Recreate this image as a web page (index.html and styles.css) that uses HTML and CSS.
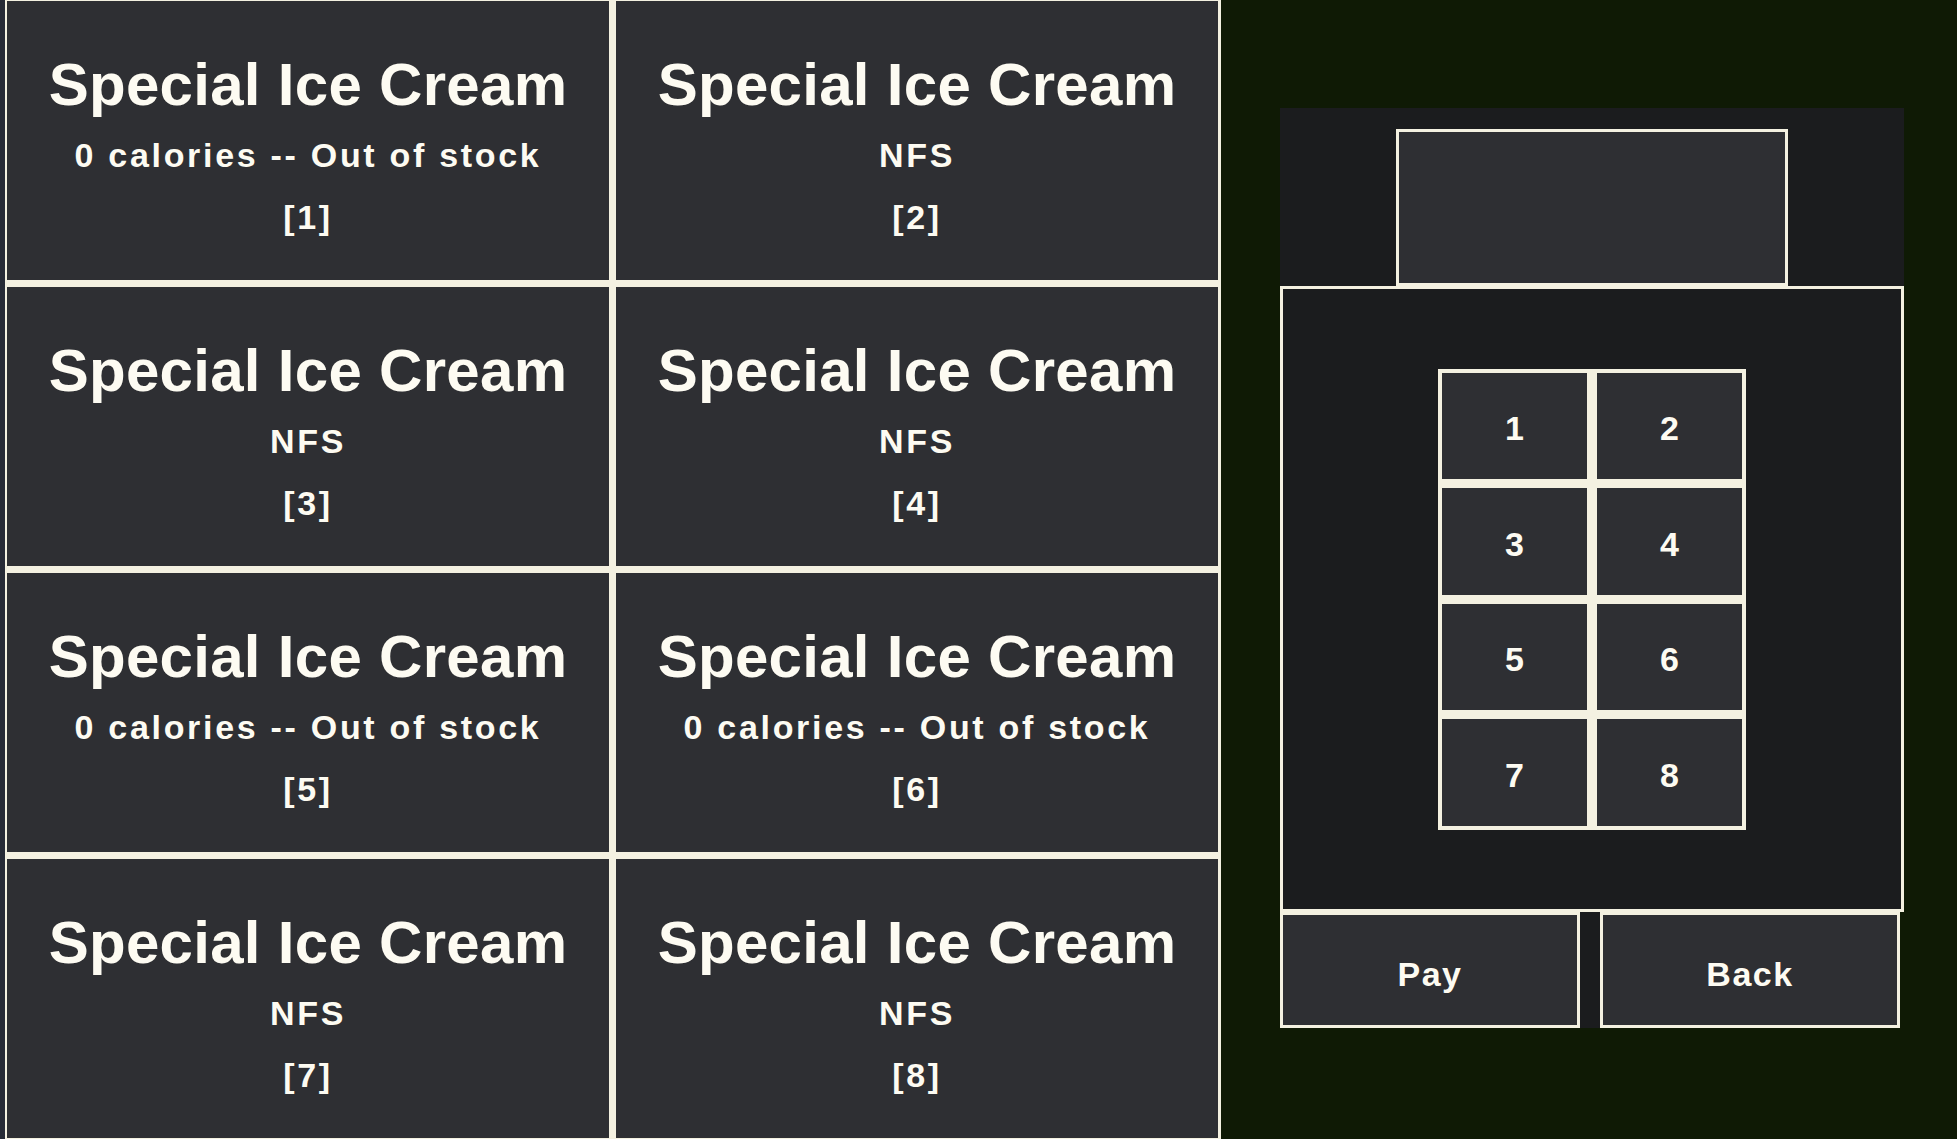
FILE: index.html
```html
<!DOCTYPE html>
<html lang="en">
<head>
<meta charset="utf-8">
<title>Ice Cream Vending</title>
<link rel="stylesheet" href="styles.css">
</head>
<body>
<div class="app">
  <div class="products">
    <div class="product"><div class="p-name">Special Ice Cream</div><div class="p-info">0 calories -- Out of stock</div><div class="p-idx">[1]</div></div>
    <div class="product"><div class="p-name">Special Ice Cream</div><div class="p-info">NFS</div><div class="p-idx">[2]</div></div>
    <div class="product"><div class="p-name">Special Ice Cream</div><div class="p-info">NFS</div><div class="p-idx">[3]</div></div>
    <div class="product"><div class="p-name">Special Ice Cream</div><div class="p-info">NFS</div><div class="p-idx">[4]</div></div>
    <div class="product"><div class="p-name">Special Ice Cream</div><div class="p-info">0 calories -- Out of stock</div><div class="p-idx">[5]</div></div>
    <div class="product"><div class="p-name">Special Ice Cream</div><div class="p-info">0 calories -- Out of stock</div><div class="p-idx">[6]</div></div>
    <div class="product"><div class="p-name">Special Ice Cream</div><div class="p-info">NFS</div><div class="p-idx">[7]</div></div>
    <div class="product"><div class="p-name">Special Ice Cream</div><div class="p-info">NFS</div><div class="p-idx">[8]</div></div>
  </div>
  <div class="side">
    <div class="panel">
      <div class="panel-top">
        <div class="display"></div>
      </div>
      <div class="panel-keys">
        <div class="keypad">
          <div class="key">1</div><div class="key">2</div>
          <div class="key">3</div><div class="key">4</div>
          <div class="key">5</div><div class="key">6</div>
          <div class="key">7</div><div class="key">8</div>
        </div>
      </div>
      <div class="actions">
        <div class="btn">Pay</div>
        <div class="btn">Back</div>
      </div>
    </div>
  </div>
</div>
</body>
</html>
```
FILE: styles.css
```css
html, body {
  margin: 0;
  padding: 0;
  height: 100%;
}
body {
  background: #0f1a05;
  font-family: "Liberation Sans", Arial, sans-serif;
  color: #fdfbf2;
  overflow: hidden;
}
.app {
  display: flex;
  height: 1139px;
}
.products {
  box-sizing: border-box;
  width: 1221px;
  height: 1139px;
  border-left: 5px solid #272b36;
  background: #f4f1e1;
  padding: 1px 3px 1px 2px;
  display: grid;
  grid-template-columns: 1fr 1fr;
  grid-template-rows: repeat(4, 1fr);
  gap: 7px;
}
.product {
  background: #2e2f33;
  display: flex;
  flex-direction: column;
  align-items: center;
  justify-content: center;
  padding-top: 16px;
  box-sizing: border-box;
  font-weight: bold;
  text-align: center;
}
.p-name {
  font-size: 60px;
  line-height: 70px;
  letter-spacing: 0.3px;
  margin-bottom: 4px;
}
.p-info, .p-idx {
  font-size: 34px;
  line-height: 62px;
  letter-spacing: 2.7px;
}
.side {
  flex: 1;
  padding: 108px 53px 0 59px;
}
.panel {
  width: 624px;
  display: flex;
  flex-direction: column;
}
.panel-top {
  background: #1b1c1e;
  height: 178px;
  display: flex;
  justify-content: center;
  align-items: flex-end;
}
.display {
  box-sizing: border-box;
  width: 392px;
  height: 157px;
  border: 3px solid #f4f1e1;
  background: #2e2f33;
}
.panel-keys {
  box-sizing: border-box;
  height: 626px;
  border: 3px solid #f4f1e1;
  background: #1b1c1e;
  display: flex;
  justify-content: center;
  align-items: center;
}
.keypad {
  box-sizing: border-box;
  width: 308px;
  height: 461px;
  background: #f4f1e1;
  padding: 4px;
  display: grid;
  grid-template-columns: 1fr 1fr;
  grid-template-rows: repeat(4, 1fr);
  gap: 9px 10px;
}
.key {
  background: #2e2f33;
  display: flex;
  align-items: center;
  justify-content: center;
  padding-top: 6px;
  box-sizing: border-box;
  font-weight: bold;
  font-size: 34px;
}
.actions {
  width: 620px;
  height: 116px;
  display: flex;
  justify-content: space-between;
  background: #1b1c1e;
}
.btn {
  box-sizing: border-box;
  width: 300px;
  height: 116px;
  border: 3px solid #f4f1e1;
  background: #2e2f33;
  display: flex;
  align-items: center;
  justify-content: center;
  padding-top: 8px;
  font-weight: bold;
  font-size: 34px;
  letter-spacing: 1.5px;
}
```
